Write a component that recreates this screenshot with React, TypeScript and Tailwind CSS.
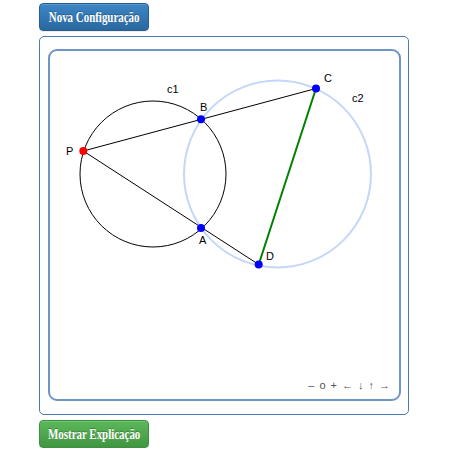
const serif = "font-['Liberation_Serif',serif]";

const Btn = ({ label, tone }: { label: string; tone: "blue" | "green" }) => {
  const colors =
    tone === "blue"
      ? "bg-gradient-to-b from-[#3d86c6] to-[#2a689f] border-[#285e8e]"
      : "bg-gradient-to-b from-[#5cb85c] to-[#419641] border-[#3e8f3e]";
  return (
    <button
      className={`${colors} ${serif} shrink-0 flex items-center justify-center w-[110px] h-[28px] rounded-[4px] border text-white text-[14px] font-bold whitespace-nowrap [text-shadow:0_-1px_0_rgba(0,0,0,0.25)] shadow-[inset_0_1px_0_rgba(255,255,255,0.15),0_1px_1px_rgba(0,0,0,0.075)]`}
    >
      <span className="inline-block scale-x-[0.78]">{label}</span>
    </button>
  );
};

const Board = () => {
  const label = "text-[11px] fill-black font-['Liberation_Sans',sans-serif]";
  return (
    <svg className="absolute inset-0 w-full h-full" viewBox="50 51 349 348">
      <circle cx={277.5} cy={174} r={93.5} fill="none" stroke="#c4d7f8" strokeWidth={2} />
      <circle cx={153} cy={174} r={73} fill="none" stroke="#000" strokeWidth={1} />
      <line x1={83.3} y1={151} x2={316} y2={88.5} stroke="#000" strokeWidth={1} />
      <line x1={83.3} y1={151} x2={258.7} y2={264.5} stroke="#000" strokeWidth={1} />
      <line x1={316} y1={88.5} x2={258.7} y2={264.5} stroke="#008000" strokeWidth={2} />
      <circle cx={83.3} cy={151} r={4} fill="#ff0000" />
      <circle cx={201} cy={119.3} r={4} fill="#0000ff" />
      <circle cx={201} cy={228} r={4} fill="#0000ff" />
      <circle cx={316} cy={88.5} r={4} fill="#0000ff" />
      <circle cx={258.7} cy={264.5} r={4} fill="#0000ff" />
      <text x={167} y={93} className={label}>c1</text>
      <text x={200} y={111} className={label}>B</text>
      <text x={66} y={155} className={label}>P</text>
      <text x={199} y={244} className={label}>A</text>
      <text x={324} y={82} className={label}>C</text>
      <text x={352} y={102} className={label}>c2</text>
      <text x={266} y={260} className={label}>D</text>
    </svg>
  );
};

export default function App() {
  return (
    <div className="pl-[39px] pt-[3px] flex flex-col items-start bg-white w-[450px]">
      <Btn label="Nova Configuração" tone="blue" />
      <div className="shrink-0 mt-[5px] w-[370px] h-[379px] border border-[#4a7bb0] rounded-[5px] pl-[8px] pr-[7px] pt-[12px] pb-[13px]">
        <div className="relative w-full h-full border-2 border-[#6f95c4] rounded-[9px] overflow-hidden">
          <Board />
          <div className="absolute right-[9px] bottom-[6px] flex gap-[5px] text-[11px] text-[#555] font-['Liberation_Sans',sans-serif]">
            <span>–</span>
            <span>o</span>
            <span>+</span>
            <span>←</span>
            <span>↓</span>
            <span>↑</span>
            <span>→</span>
          </div>
        </div>
      </div>
      <div className="shrink-0 mt-[5px]">
        <Btn label="Mostrar Explicação" tone="green" />
      </div>
    </div>
  );
}
